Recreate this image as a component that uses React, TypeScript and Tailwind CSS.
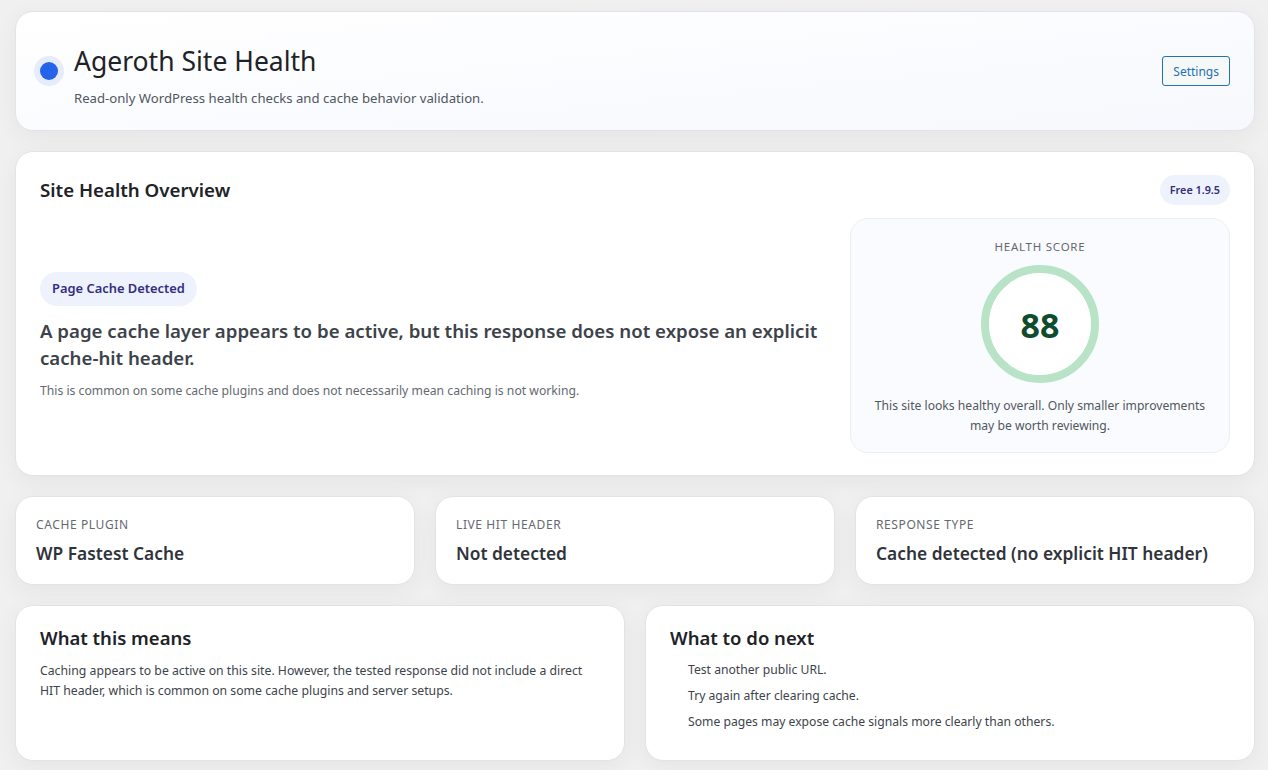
const font = { fontFamily: '"Noto Sans", sans-serif' };

const cardClass =
  "bg-white rounded-[18px] border border-[#e2e3e6] shadow-[0_6px_24px_rgba(0,0,0,0.05)]";

function MetricCard({ label, value }: { label: string; value: string }) {
  return (
    <div className={`${cardClass} h-[89px] px-5 pt-[19px]`}>
      <div className="text-[12px] leading-[18px] tracking-[0.6px] uppercase text-[#646970]">
        {label}
      </div>
      <div className="mt-[6px] text-[17.35px] leading-[26px] font-semibold text-[#2f343a]">
        {value}
      </div>
    </div>
  );
}

export default function App() {
  return (
    <div
      className="min-h-[770px] bg-[#f0f0f1] pl-[15px] pr-[13px] pt-[11px] flex flex-col gap-5"
      style={font}
    >
      {/* header */}
      <div className={`${cardClass} h-[120px] bg-gradient-to-br from-white to-[#f6f8fd] pl-[18px] pr-6 flex items-center justify-between`}>
        <div className="flex items-center gap-[10px]">
          <div className="w-[30px] h-[30px] rounded-full bg-[#e6ecfb] flex items-center justify-center">
            <div className="w-[18px] h-[18px] rounded-full bg-[#2563eb]" />
          </div>
          <div>
            <h1 className="text-[26.5px] leading-[36px] text-[#1d2327] pt-[7px]">Ageroth Site Health</h1>
            <p className="mt-[10px] text-[13.15px] leading-[18px] text-[#50575e]">
              Read-only WordPress health checks and cache behavior validation.
            </p>
          </div>
        </div>
        <button className="h-[30px] px-[10px] pt-[1px] rounded-[3px] border border-[#2271b1] bg-[#f6f7f7] text-[12px] text-[#2271b1]">
          Settings
        </button>
      </div>

      {/* overview */}
      <div className={`${cardClass} h-[325px] px-6 pt-[23px]`}>
        <div className="flex items-center justify-between h-[30px]">
          <h2 className="text-[18.7px] font-semibold text-[#1d2327]">Site Health Overview</h2>
          <span className="h-[30px] px-[10px] rounded-full bg-[#eef2fd] text-[10.8px] font-semibold text-[#312e81] flex items-center">
            Free 1.9.5
          </span>
        </div>
        <div className="mt-[13px] flex gap-5">
          <div className="flex-1 flex flex-col justify-center items-start">
            <span className="h-[34px] px-3 pt-[1px] rounded-full bg-[#eef2fd] text-[12.9px] font-semibold text-[#312e81] flex items-center">
              Page Cache Detected
            </span>
            <p className="mt-[11px] text-[18.65px] leading-[27px] font-semibold text-[#3c434a]">
              A page cache layer appears to be active, but this response does not expose an explicit cache-hit header.
            </p>
            <p className="mt-[11px] text-[12.2px] leading-[18px] text-[#646970]">
              This is common on some cache plugins and does not necessarily mean caching is not working.
            </p>
          </div>
          <div className="w-[380px] h-[235px] shrink-0 rounded-[18px] border border-[#eceef3] bg-[#fafbff] flex flex-col items-center pt-[19px]">
            <div className="text-[11.5px] leading-[18px] tracking-[0.75px] uppercase text-[#646970]">Health score</div>
            <div className="mt-[9px] w-[118px] h-[118px] rounded-full border-[8px] border-[#b8e3c6] bg-white flex items-center justify-center">
              <span className="text-[34px] font-bold text-[#0f4c2e] pt-[2px]">88</span>
            </div>
            <p className="mt-[13px] w-[340px] text-center text-[12.15px] leading-[20px] text-[#50575e]">
              This site looks healthy overall. Only smaller improvements may be worth reviewing.
            </p>
          </div>
        </div>
      </div>

      {/* metrics */}
      <div className="grid grid-cols-3 gap-5">
        <MetricCard label="Cache plugin" value="WP Fastest Cache" />
        <MetricCard label="Live HIT header" value="Not detected" />
        <MetricCard label="Response type" value="Cache detected (no explicit HIT header)" />
      </div>

      {/* notes */}
      <div className="grid grid-cols-2 gap-5">
        <div className={`${cardClass} h-[156px] px-6 pt-[18px]`}>
          <h2 className="text-[18.5px] leading-[28px] font-semibold text-[#1d2327]">What this means</h2>
          <p className="mt-[9px] text-[12.25px] leading-[20px] text-[#3c434a]">
            Caching appears to be active on this site. However, the tested response did not include a direct HIT header, which is common on some cache plugins and server setups.
          </p>
        </div>
        <div className={`${cardClass} h-[156px] px-6 pt-[18px]`}>
          <h2 className="text-[18.5px] leading-[28px] font-semibold text-[#1d2327]">What to do next</h2>
          <ul className="mt-[8px] pl-[18px] text-[12.17px] leading-[20px] text-[#3c434a] flex flex-col gap-[6px]">
            <li>Test another public URL.</li>
            <li>Try again after clearing cache.</li>
            <li>Some pages may expose cache signals more clearly than others.</li>
          </ul>
        </div>
      </div>
    </div>
  );
}
